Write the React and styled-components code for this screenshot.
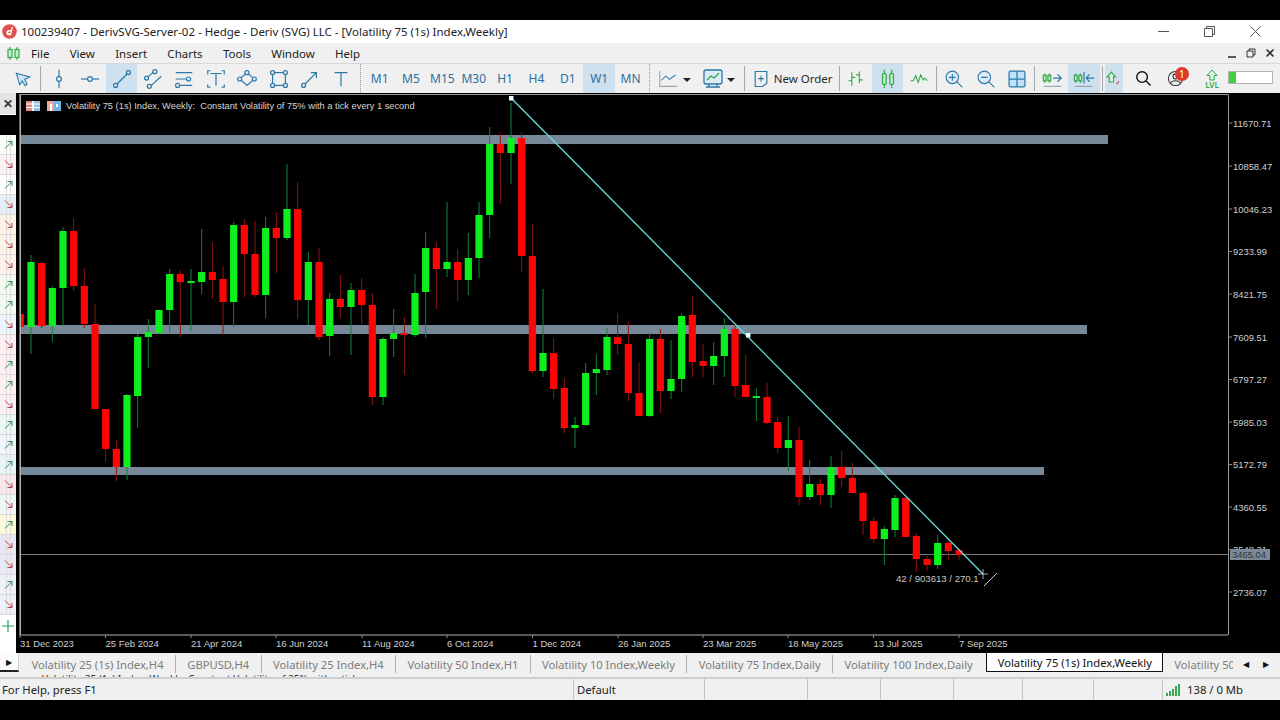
import React from "react";
import styled, { createGlobalStyle } from "styled-components";

const GlobalStyle = createGlobalStyle`
  html, body { margin: 0; padding: 0; background: #000; }
  * { box-sizing: border-box; }
`;

const UI_FONT = `"Noto Sans", "Open Sans", "Liberation Sans", sans-serif`;

const Window = styled.div`
  width: 1280px;
  height: 720px;
  display: flex;
  flex-direction: column;
  overflow: hidden;
  font-family: ${UI_FONT};
  background: #000;
`;

const Letterbox = styled.div`
  height: 20px;
  flex: none;
  background: #000;
`;

const Spacer = styled.div`
  flex: none;
  width: ${(p) => p.$w || 2}px;
`;

const TitleBar = styled.div`
  height: 23px;
  flex: none;
  background: #fff;
  display: flex;
  align-items: center;
  padding-left: 2px;
  font-size: 11.5px;
  color: #222;
`;

const TitleText = styled.span`
  margin-left: 4px;
  flex: 1;
  white-space: nowrap;
`;

const WinButton = styled.div`
  width: 46px;
  height: 23px;
  display: flex;
  align-items: center;
  justify-content: center;
  color: #555;
`;

const MenuBar = styled.div`
  height: 20px;
  flex: none;
  background: #f0f0f0;
  display: flex;
  align-items: center;
  padding: 0 1px 0 6px;
  font-size: 11.5px;
  color: #222;
`;

const MenuItems = styled.div`
  display: flex;
  gap: 20.3px;
  margin-left: 10px;
  flex: 1;
`;

const SubButton = styled.div`
  width: 19px;
  height: 20px;
  display: flex;
  align-items: center;
  justify-content: center;
  color: #555;
`;

const Toolbar = styled.div`
  height: 30px;
  flex: none;
  background: #f0f0f0;
  border-top: 1px solid #d8d8d8;
  display: flex;
  align-items: stretch;
  padding-left: 7px;
`;

const ToolButton = styled.div`
  position: relative;
  flex: none;
  width: ${(p) => p.$w || 31.36}px;
  margin-left: ${(p) => p.$ml || 0}px;
  display: flex;
  align-items: center;
  justify-content: ${(p) => p.$justify || "center"};
  gap: ${(p) => p.$gap || 0}px;
  overflow: hidden;
  color: ${(p) => p.$color || "#2b78a8"};
  background: ${(p) => (p.$active ? "#cfe0ef" : "transparent")};
`;

const Timeframe = styled(ToolButton)`
  color: #2a6f9e;
  font-size: 12px;
`;

const OrderLabel = styled.span`
  color: #2a2a2a;
  font-size: 11.5px;
  white-space: nowrap;
`;

const Separator = styled.div`
  flex: none;
  width: ${(p) => p.$w || 5}px;
  display: flex;
  justify-content: center;
  &::before {
    content: "";
    width: 1px;
    background: #a8a8a8;
    margin: 2px 0;
  }
`;

const Grip = styled.div`
  flex: none;
  width: 7px;
  display: flex;
  justify-content: center;
  &::before {
    content: "";
    border-left: 1px dotted #999;
  }
`;

const Caret = styled.div`
  flex: none;
  margin-left: 2px;
  margin-top: 3px;
  width: 0;
  height: 0;
  border-left: 4px solid transparent;
  border-right: 4px solid transparent;
  border-top: 4px solid #222;
`;

const Badge = styled.div`
  position: absolute;
  left: 15px;
  top: 3px;
  width: 14px;
  height: 14px;
  border-radius: 50%;
  background: #dc3c2a;
  color: #fff;
  font-size: 10px;
  line-height: 14px;
  text-align: center;
`;

const LvlStack = styled.div`
  display: flex;
  flex-direction: column;
  align-items: center;
  line-height: 8px;
  font-size: 8px;
  font-weight: 600;
  color: #2fa84a;
`;

const MarginBar = styled.div`
  flex: none;
  align-self: center;
  width: 45px;
  height: 13px;
  background: #fff;
  border: 1px solid #b4b4b4;
  margin-top: -3px;
`;

const MarginFill = styled.div`
  height: 100%;
  background: #3fd03f;
`;

const Workspace = styled.div`
  height: 560px;
  flex: none;
  display: flex;
  background: #000;
  position: relative;
`;

const SideStrip = styled.div`
  width: 16px;
  flex: none;
  display: flex;
  flex-direction: column;
  background: #fff;
`;

const SideHeader = styled.div`
  height: 21px;
  background: #e4e4e4;
  display: flex;
  align-items: center;
  justify-content: center;
  font-size: 12px;
  font-weight: 700;
  color: #333;
`;

const SideBlack = styled.div`
  height: 21px;
  background: #000;
  border-top: 1px solid #fff;
`;

const SideRow = styled.div`
  height: 20px;
  display: flex;
  align-items: center;
  justify-content: center;
  background-color: ${(p) => p.$bg};
  background-image: linear-gradient(90deg, transparent 6px, #dcdcdc 6px, #dcdcdc 7px, transparent 7px, transparent 10px, #dcdcdc 10px, #dcdcdc 11px, transparent 11px);
  border-bottom: 1px solid #d9d9d9;
`;

const SideAdd = styled.div`
  flex: 1;
  display: flex;
  justify-content: center;
  padding-top: 5px;
  color: #2f9e5f;
`;

const ChartSvg = styled.svg`
  display: block;
  flex: none;
  width: 1264px;
  height: 560px;
`;

const Legend = styled.div`
  position: absolute;
  left: 26px;
  top: 7px;
  display: flex;
  align-items: center;
  gap: 5px;
  font-family: "Liberation Sans", sans-serif;
  font-size: 9.3px;
  color: #d6d6d6;
  white-space: pre;
`;

const TabBar = styled.div`
  height: 22px;
  flex: none;
  background: #f0f0f0;
  display: flex;
  align-items: flex-start;
  font-size: 11.2px;
  color: #7c7c7c;
  position: relative;
`;

const TabScroll = styled.div`
  width: 19px;
  flex: none;
  height: 19px;
  display: flex;
  align-items: center;
  justify-content: center;
  border-right: 1px solid #ccc;
  border-bottom: 2px solid #222;
  margin-right: 1px;
  background: #fbfbfb;
  color: #111;
  font-size: 8px;
`;

const Tab = styled.div`
  height: ${(p) => (p.$active ? 20 : 18)}px;
  margin-top: ${(p) => (p.$active ? -1 : 2)}px;
  margin-left: ${(p) => (p.$active ? 2 : 0)}px;
  padding: 0 ${(p) => (p.$active ? 10.5 : 11.4)}px;
  display: flex;
  align-items: center;
  white-space: nowrap;
  flex: none;
  color: ${(p) => (p.$active ? "#111" : "#7c7c7c")};
  background: ${(p) => (p.$active ? "#fff" : "transparent")};
  border: ${(p) => (p.$active ? "1px solid #111" : "none")};
  border-right: ${(p) => (p.$sep ? "1px solid #b0b0b0" : p.$active ? "1px solid #111" : "none")};
`;

const TabClip = styled.div`
  width: 70px;
  flex: none;
  overflow: hidden;
  margin-top: 2px;
  height: 18px;
  padding-left: 11px;
  display: flex;
  align-items: center;
  white-space: nowrap;
`;

const TabArrows = styled.div`
  display: flex;
  gap: 14px;
  margin-left: 10px;
  margin-top: 5px;
  color: #111;
  font-size: 8px;
`;

const ClippedRow = styled.div`
  height: 2px;
  flex: none;
  overflow: hidden;
  background: #f0f0f0;
  padding-left: 42px;
  font-size: 10px;
  line-height: 10px;
  color: #333;
  white-space: nowrap;
  & > span { display: block; margin-top: -1px; }
`;

const StatusBar = styled.div`
  height: 23px;
  flex: none;
  background: #f0f0f0;
  border-top: 2px solid #cfcfcf;
  display: flex;
  font-size: 11.3px;
  color: #222;
`;

const StatusCell = styled.div`
  flex: none;
  width: ${(p) => p.$w}px;
  border-left: ${(p) => (p.$first ? "none" : "1px solid #c4c4c4")};
  padding-left: ${(p) => (p.$first ? 2 : 3)}px;
  display: flex;
  align-items: center;
  gap: 6px;
`;

const Glyph = styled.svg`
  display: block;
  flex: none;
  fill: none;
  stroke: currentColor;
  stroke-width: ${(p) => p.$sw || 1.3};
`;

function Icon({ size = 22, sw, children }) {
  return (
    <Glyph width={size} height={size} viewBox="0 0 24 24" $sw={sw}>
      {children}
    </Glyph>
  );
}

const Dot = ({ x, y, r = 2.2, bg = "#f0f0f0" }) => <circle cx={x} cy={y} r={r} fill={bg} />;

const CandleGlyph = ({ x, top, bottom, wt, wb }) => (
  <g>
    <line x1={x} x2={x} y1={wt} y2={wb} />
    <rect x={x - 2} y={top} width="4" height={bottom - top} rx="1" fill="#bff0c4" />
  </g>
);

const candles = [
  ["r", 310, 314, 327, 330], ["g", 255, 262, 327, 354], ["r", 262, 263, 326, 328], ["g", 286, 288, 326, 342],
  ["g", 227, 231, 288, 326], ["r", 218, 231, 286, 291], ["r", 268, 286, 324, 328], ["r", 304, 324, 409, 409],
  ["r", 409, 409, 449, 462], ["r", 440, 449, 467, 481], ["g", 394, 395, 467, 480], ["g", 334, 337, 396, 428],
  ["g", 319, 332, 337, 368], ["g", 310, 310, 333, 334], ["g", 269, 274, 310, 332], ["r", 270, 274, 282, 337],
  ["g", 269, 281, 283, 331], ["g", 229, 272, 282, 294], ["r", 242, 272, 280, 299], ["r", 266, 279, 302, 335],
  ["g", 222, 225, 302, 327], ["r", 219, 225, 254, 297], ["r", 221, 254, 295, 297], ["g", 217, 228, 295, 318],
  ["r", 212, 228, 238, 273], ["g", 164, 209, 238, 240], ["r", 182, 209, 300, 319], ["g", 252, 262, 300, 325],
  ["r", 248, 262, 337, 340], ["g", 293, 299, 336, 356], ["r", 275, 299, 307, 318], ["g", 283, 290, 307, 355],
  ["r", 278, 290, 305, 324], ["r", 293, 305, 397, 405], ["g", 337, 339, 397, 405], ["g", 309, 333, 339, 357],
  ["r", 317, 333, 335, 375], ["g", 274, 293, 335, 337], ["g", 232, 248, 292, 338], ["r", 242, 248, 269, 309],
  ["g", 202, 262, 269, 277], ["r", 249, 262, 280, 301], ["g", 233, 258, 280, 295], ["g", 202, 215, 258, 278],
  ["g", 127, 144, 215, 238], ["r", 132, 144, 153, 204], ["g", 103, 138, 153, 184], ["r", 132, 138, 256, 272],
  ["r", 224, 256, 371, 373], ["g", 289, 353, 371, 377], ["r", 338, 353, 389, 399], ["r", 378, 388, 428, 433],
  ["g", 417, 425, 428, 448], ["g", 363, 373, 425, 426], ["g", 354, 369, 373, 395], ["g", 328, 337, 370, 375],
  ["r", 313, 337, 344, 355], ["r", 322, 344, 393, 401], ["r", 362, 393, 416, 416], ["g", 333, 339, 416, 417],
  ["r", 329, 339, 391, 413], ["g", 340, 379, 391, 399], ["g", 313, 316, 379, 392], ["r", 296, 315, 362, 377],
  ["r", 344, 361, 366, 377], ["g", 342, 356, 366, 385], ["g", 318, 329, 356, 377], ["r", 325, 329, 386, 397],
  ["r", 355, 385, 397, 397], ["g", 388, 396, 398, 421], ["r", 383, 397, 423, 424], ["r", 417, 422, 448, 453],
  ["g", 416, 440, 448, 471], ["r", 427, 440, 497, 505], ["g", 460, 484, 497, 500], ["r", 479, 484, 495, 505],
  ["g", 456, 467, 495, 508], ["r", 451, 467, 478, 487], ["r", 463, 478, 493, 493], ["r", 492, 493, 521, 535],
  ["r", 517, 521, 539, 543], ["g", 526, 529, 539, 565], ["g", 495, 498, 530, 537], ["r", 495, 498, 537, 537],
  ["r", 533, 536, 559, 572], ["r", 556, 559, 565, 571], ["g", 535, 543, 565, 569], ["r", 541, 543, 551, 560],
  ["r", 548, 550, 555, 560],
];

const levels = [
  { top: 135, height: 9, right: 1108 },
  { top: 325, height: 9, right: 1087 },
  { top: 467, height: 8, right: 1044 },
];

const priceLabels = [
  ["11670.71", 123], ["10858.47", 166], ["10046.23", 209], ["9233.99", 251.5], ["8421.75", 294], ["7609.51", 337],
  ["6797.27", 379.5], ["5985.03", 422], ["5172.79", 464.5], ["4360.55", 507], ["3548.31", 549.5], ["2736.07", 592],
];

const dateLabels = [
  ["31 Dec 2023", 20], ["25 Feb 2024", 105.5], ["21 Apr 2024", 191], ["16 Jun 2024", 276], ["11 Aug 2024", 362],
  ["6 Oct 2024", 447], ["1 Dec 2024", 532.5], ["26 Jan 2025", 618], ["23 Mar 2025", 703], ["18 May 2025", 788],
  ["13 Jul 2025", 873.5], ["7 Sep 2025", 959],
];

const sideRows = [
  [1, "#fafdfa"], [0, "#fdf2f2"], [1, "#ffffff"], [0, "#e4edf8"], [0, "#fdf3e4"], [0, "#fdf3e4"], [0, "#fdf0e8"], [1, "#f3f9ee"],
  [1, "#f2faf2"], [0, "#eaf5fc"], [0, "#fdeef2"], [1, "#fdeef2"], [1, "#fdeef2"], [0, "#fbeef6"], [1, "#eaf8f4"], [1, "#eef5fb"],
  [1, "#e8f3f8"], [0, "#f8e8ee"], [0, "#eef7f8"], [1, "#fdf8d8"], [0, "#e6e6f4"], [0, "#e8e8f8"], [1, "#eef1fa"], [0, "#eef1fa"],
];

const tabs = [
  "Volatility 25 (1s) Index,H4",
  "GBPUSD,H4",
  "Volatility 25 Index,H4",
  "Volatility 50 Index,H1",
  "Volatility 10 Index,Weekly",
  "Volatility 75 Index,Daily",
  "Volatility 100 Index,Daily",
];

const statusWidths = [131, 103, 73, 73, 69, 71, 69];

function Chart() {
  const axis = "#8a8a8a";
  return (
    <ChartSvg viewBox="16 93 1264 560">
      <defs>
        <clipPath id="plot">
          <rect x="20" y="94" width="1208" height="541" />
        </clipPath>
      </defs>
      <g clipPath="url(#plot)">
        {levels.map((l) => (
          <rect key={l.top} x="20" y={l.top} width={l.right - 20} height={l.height} fill="#778899" />
        ))}
        <line x1="20" x2="1228" y1="554.5" y2="554.5" stroke="#767676" />
        {candles.map(([c, wt, top, bottom, wb], i) => {
          const x = 20.33 + i * 10.667;
          return (
            <g key={i}>
              <line x1={x} x2={x} y1={wt} y2={wb} stroke={c === "g" ? "#12803a" : "#8f1414"} />
              <rect x={x - 3.6} y={top} width="7.2" height={Math.max(bottom - top, 1.5)} fill={c === "g" ? "#0cf01c" : "#ff0505"} />
            </g>
          );
        })}
        <line x1="511" y1="98" x2="983" y2="574" stroke="#66e0dc" strokeWidth="1.3" />
        <rect x="509" y="96" width="4.5" height="4.5" fill="#e8ffff" />
        <rect x="746" y="333" width="4.5" height="4.5" fill="#e8ffff" />
      </g>

      <path d="M20.5 635V94.5H1228.5V635" fill="none" stroke="#9a9a9a" />
      <line x1="20" x2="1228" y1="635" y2="635" stroke="#777" strokeWidth="1.4" />
      <line x1="20" x2="20" y1="94" y2="635" stroke="#c8c8c8" />

      {priceLabels.map(([t, y]) => (
        <g key={t}>
          <line x1="1228" x2="1232" y1={y} y2={y} stroke={axis} />
          <text x="1233" y={y + 3.5} fill="#cfcfcf" fontFamily="Liberation Sans, sans-serif" fontSize="9.4">{t}</text>
        </g>
      ))}
      <rect x="1230" y="549" width="40" height="11" fill="#7c8a98" />
      <text x="1232" y="558" fill="#2f353b" fontFamily="Liberation Sans, sans-serif" fontSize="9.4">3465.04</text>

      {dateLabels.map(([t, x]) => (
        <g key={t}>
          <line x1={x} x2={x} y1="635" y2="638" stroke={axis} />
          <text x={x} y="646.5" fill="#cfcfcf" fontFamily="Liberation Sans, sans-serif" fontSize="9.5">{t}</text>
        </g>
      ))}

      {/* measuring cursor */}
      <path d="M978 574H988M983 569V579" stroke="#d0d0d0" strokeWidth="0.8" />
      <line x1="984" y1="586" x2="997" y2="573" stroke="#c8c8c8" />
      <text x="896" y="582" fill="#c8c8c8" fontFamily="Liberation Sans, sans-serif" fontSize="9.6">42 / 903613 / 270.1</text>
    </ChartSvg>
  );
}

function SideArrow({ up }) {
  return (
    <svg width="11" height="11" viewBox="0 0 11 11" fill="none" stroke={up ? "#2f8f58" : "#b8434f"} strokeWidth="1">
      {up ? <path d="M2 9.5 9 2.5M4.5 2.5H9V7" /> : <path d="M2 1.5 9 8.5M4.5 8.5H9V4" />}
    </svg>
  );
}

export default function App() {
  return (
    <Window>
      <GlobalStyle />
      <Letterbox />

      <TitleBar>
        <svg width="15" height="15" viewBox="0 0 15 15">
          <circle cx="7.5" cy="7.5" r="7.3" fill="#e0504f" />
          <path d="M9.6 3 8.9 6H7a2.6 2.6 0 0 0-2.6 2.2C4.1 10 5.2 11.3 6.8 11.3H9.1L10.9 3ZM8.3 9.3H7.1C6.5 9.3 6.2 8.9 6.3 8.3C6.4 7.8 6.8 7.5 7.3 7.5H8.6Z" fill="#fff" fillRule="evenodd" />
        </svg>
        <TitleText>100239407 - DerivSVG-Server-02 - Hedge - Deriv (SVG) LLC - [Volatility 75 (1s) Index,Weekly]</TitleText>
        <WinButton>
          <svg width="11" height="11" viewBox="0 0 11 11" stroke="currentColor"><path d="M0 5.5H11" /></svg>
        </WinButton>
        <WinButton>
          <svg width="11" height="11" viewBox="0 0 11 11" fill="none" stroke="currentColor"><path d="M.5 2.5H8.5V10.5H.5ZM2.5 2.5V.5H10.5V8.5H8.5" /></svg>
        </WinButton>
        <WinButton>
          <svg width="11" height="11" viewBox="0 0 11 11" stroke="currentColor"><path d="M.5.5 10.5 10.5M10.5.5.5 10.5" /></svg>
        </WinButton>
        <Spacer />
      </TitleBar>

      <MenuBar>
        <svg width="15" height="15" viewBox="0 0 15 15" fill="none" stroke="#2fa84a" strokeWidth="1.2">
          <path d="M4 1V14M11 1V14" />
          <rect x="2" y="3.5" width="4" height="8" fill="#c9efc9" />
          <rect x="9" y="3.5" width="4" height="8" fill="#c9efc9" />
        </svg>
        <MenuItems>
          {["File", "View", "Insert", "Charts", "Tools", "Window", "Help"].map((m) => (
            <span key={m}>{m}</span>
          ))}
        </MenuItems>
        <SubButton>
          <svg width="10" height="10" viewBox="0 0 10 10" stroke="#333" strokeWidth="1.6"><path d="M1 9H9" /></svg>
        </SubButton>
        <SubButton>
          <svg width="10" height="10" viewBox="0 0 10 10" fill="none" stroke="#333"><path d="M1 3H7V9H1ZM3 3V1H9V7H7" /></svg>
        </SubButton>
        <SubButton>
          <svg width="10" height="10" viewBox="0 0 10 10" stroke="#333" strokeWidth="1.6"><path d="M1.5 1.5 8.5 8.5M8.5 1.5 1.5 8.5" /></svg>
        </SubButton>
      </MenuBar>

      <Toolbar>
        <ToolButton>
          <Icon size={20}><path d="M4 5 20 9.5 14 12.5 17 18 14.5 20 11 14.5 8 19Z" fill="#cfe4f4" /></Icon>
        </ToolButton>
        <Separator />
        <ToolButton><Icon><path d="M12 2V22" /><Dot x={12} y={12} r={2.6} /></Icon></ToolButton>
        <ToolButton><Icon><path d="M2 12H22" /><Dot x={12} y={12} r={2.6} /></Icon></ToolButton>
        <ToolButton $active><Icon><path d="M6 18 18 6" /><Dot x={5} y={19} bg="#cfe0ef" /><Dot x={19} y={5} bg="#cfe0ef" /></Icon></ToolButton>
        <ToolButton><Icon><path d="M5 11 13 4M9 20 21 9" /><Dot x={5} y={11} /><Dot x={14} y={4} /><Dot x={8} y={20} /></Icon></ToolButton>
        <ToolButton><Icon><path d="M3 5H21M3 12H15M8 19H21" /><Dot x={17} y={12} /><Dot x={5} y={19} /></Icon></ToolButton>
        <ToolButton><Icon><path d="M3 7V3H6M18 3H21V7M3 18V21H6M18 21H21V18M6 6H18M12 6V19" /></Icon></ToolButton>
        <ToolButton><Icon><path d="M12 5 20 12 12 19 4 12Z" /><Dot x={4} y={12} /><Dot x={20} y={12} /><Dot x={12} y={5} /></Icon></ToolButton>
        <ToolButton><Icon><rect x="5" y="5" width="14" height="14" /><Dot x={5} y={5} /><Dot x={19} y={5} /><Dot x={5} y={19} /><Dot x={19} y={19} /></Icon></ToolButton>
        <ToolButton><Icon><path d="M6 18 19 5M13 5H19V11" /><Dot x={5} y={19} /></Icon></ToolButton>
        <ToolButton><Icon><path d="M5 5H19M12 5V20" /></Icon></ToolButton>
        <Grip />
        {["M1", "M5", "M15", "M30", "H1", "H4", "D1", "W1", "MN"].map((t) => (
          <Timeframe key={t} $active={t === "W1"}>{t}</Timeframe>
        ))}
        <Grip />
        <ToolButton $w={44.5} $justify="flex-start" $gap={2} $color="#6f7f8a">
          <Spacer $w={3} />
          <Icon size={21} sw={1.2}><path d="M2 3V21H22" stroke="#9aa4ab" /><path d="M4 14 9 9 13 13 20 8" stroke="#2b78a8" /></Icon>
          <Caret />
        </ToolButton>
        <ToolButton $w={44} $justify="flex-start">
          <Spacer $w={3} />
          <Icon size={24} sw={1.3}>
            <rect x="3" y="3" width="18" height="14" rx="2" fill="#dcebf6" />
            <path d="M6 13 10 9 13 11 18 6" stroke="#2fa84a" />
            <path d="M5 20H19M8 17V20M16 17V20" />
          </Icon>
          <Caret />
        </ToolButton>
        <Separator />
        <ToolButton $w={91} $justify="flex-start" $gap={3}>
          <Spacer $w={1} />
          <Icon size={20} sw={1.4}>
            <path d="M5 3H19V17L14 21H5Z" />
            <path d="M12 8V15M8.5 11.5H15.5" />
          </Icon>
          <OrderLabel>New Order</OrderLabel>
        </ToolButton>
        <Separator $w={3} />
        <ToolButton $color="#2fa84a"><Icon size={20}><path d="M7 4V20M3 14H7M7 10H11M16 3V17M12 7H16M16 13H20" /></Icon></ToolButton>
        <ToolButton $active $color="#2fa84a"><Icon><CandleGlyph x={8} top={6} bottom={18} wt={2} wb={22} /><CandleGlyph x={16} top={6} bottom={18} wt={2} wb={22} /></Icon></ToolButton>
        <ToolButton $color="#2fa84a"><Icon size={20}><path d="M2 14H5L8 8 11 16 14 7 17 13 19 11 22 14" /></Icon></ToolButton>
        <Separator $w={4} />
        <ToolButton><Icon size={20}><circle cx="10" cy="10" r="7.5" fill="#dcebf6" /><path d="M15.5 15.5 22 22M10 6V14M6 10H14" /></Icon></ToolButton>
        <ToolButton><Icon size={20}><circle cx="10" cy="10" r="7.5" fill="#dcebf6" /><path d="M15.5 15.5 22 22M6 10H14" /></Icon></ToolButton>
        <ToolButton><Icon size={20} sw={1.5}><rect x="2.5" y="2.5" width="19" height="19" rx="2" fill="#bfe0f6" /><path d="M12 2.5V21.5M2.5 12H21.5" /></Icon></ToolButton>
        <Separator $w={4} />
        <ToolButton $color="#2fa84a"><Icon><path d="M3 6V16M8 6V16" /><rect x="1.5" y="8" width="3" height="6" fill="#bff0c4" /><rect x="6.5" y="8" width="3" height="6" fill="#bff0c4" /><path d="M12 11H21M17 7 21 11 17 15" stroke="#2b78a8" /><path d="M2 20H21" stroke="#9aa4ab" /></Icon></ToolButton>
        <ToolButton $active $color="#2fa84a"><Icon><path d="M3 6V16M8 6V16" /><rect x="1.5" y="8" width="3" height="6" fill="#bff0c4" /><rect x="6.5" y="8" width="3" height="6" fill="#bff0c4" /><path d="M12 4V17" stroke="#2b78a8" /><path d="M23 11H15M18 7 14.5 11 18 15" stroke="#2b78a8" /><path d="M2 20H21" stroke="#9aa4ab" /></Icon></ToolButton>
        <Separator $w={5} />
        <ToolButton $w={18} $active $justify="flex-start" $color="#2fa84a">
          <Icon size={17} sw={1.5}><path d="M9 3 15 10H12V17H6V10H3Z" fill="#dff4e2" /><path d="M16 20 20 16" stroke="#d8434f" /></Icon>
        </ToolButton>
        <ToolButton $ml={5} $color="#111"><Icon size={17} sw={2}><circle cx="10" cy="10" r="7.5" /><path d="M15.5 15.5 22 22" /></Icon></ToolButton>
        <ToolButton $ml={1} $color="#333">
          <Icon size={17} sw={1.5}><circle cx="12" cy="12" r="10" /><circle cx="12" cy="9" r="3.5" /><path d="M5 19C7 14 17 14 19 19" /></Icon>
          <Badge>1</Badge>
        </ToolButton>
        <ToolButton $ml={5} $color="#2fa84a">
          <LvlStack>
            <svg width="12" height="12" viewBox="0 0 12 12" fill="#dff4e2" stroke="#2fa84a"><path d="M6 1 11 6.5H8.2V11H3.8V6.5H1Z" /></svg>
            <span>LVL</span>
          </LvlStack>
        </ToolButton>
        <MarginBar>
          <MarginFill style={{ width: "18%" }} />
        </MarginBar>
      </Toolbar>

      <Workspace>
        <SideStrip>
          <SideHeader>✕</SideHeader>
          <SideBlack />
          {sideRows.map(([up, bg], i) => (
            <SideRow key={i} $bg={bg}><SideArrow up={up === 1} /></SideRow>
          ))}
          <SideAdd>
            <svg width="12" height="12" viewBox="0 0 12 12" stroke="currentColor" strokeWidth="1.2"><path d="M6 0V12M0 6H12" /></svg>
          </SideAdd>
        </SideStrip>
        <Chart />
        <Legend>
          <svg width="14" height="10" viewBox="0 0 14 10">
            <rect width="14" height="10" fill="#f4f4f4" />
            <path d="M0 0H6V10H0Z" fill="#e88a80" />
            <path d="M8 0H14V10H8Z" fill="#8ec3ea" />
            <path d="M0 3H14M0 6.5H14" stroke="#fff" />
          </svg>
          <svg width="14" height="11" viewBox="0 0 14 11" style={{ marginLeft: 2 }}>
            <path d="M0 1H7V11H0Z" fill="#f0a59c" />
            <path d="M7 1H14V11H7Z" fill="#6fb4e6" />
            <path d="M3 4H5V11H3ZM9 4H11V7H9Z" fill="#fff" />
          </svg>
          <span>Volatility 75 (1s) Index, Weekly:  Constant Volatility of 75% with a tick every 1 second</span>
        </Legend>
      </Workspace>

      <TabBar>
        <TabScroll>▶</TabScroll>
        {tabs.map((t, i) => (
          <Tab key={t} $sep={i < tabs.length - 1}>{t}</Tab>
        ))}
        <Tab $active>Volatility 75 (1s) Index,Weekly</Tab>
        <TabClip>Volatility 50</TabClip>
        <TabArrows>
          <span>◀</span>
          <span>▶</span>
        </TabArrows>
      </TabBar>
      <ClippedRow>
        <span>Volatility 25 (1s) Index, Weekly: Constant Volatility of 25% with a tick every</span>
      </ClippedRow>

      <StatusBar>
        <StatusCell $first $w={573}>For Help, press F1</StatusCell>
        {statusWidths.map((w, i) => (
          <StatusCell key={i} $w={w}>{i === 0 ? "Default" : ""}</StatusCell>
        ))}
        <StatusCell $w={118}>
          <svg width="15" height="12" viewBox="0 0 15 12" fill="#3aa655">
            <rect x="0" y="9" width="2" height="3" />
            <rect x="3" y="7" width="2" height="5" />
            <rect x="6" y="5" width="2" height="7" />
            <rect x="9" y="2" width="2" height="10" />
            <rect x="12" y="0" width="2" height="12" />
          </svg>
          <span>138 / 0 Mb</span>
        </StatusCell>
      </StatusBar>

      <Letterbox />
    </Window>
  );
}
